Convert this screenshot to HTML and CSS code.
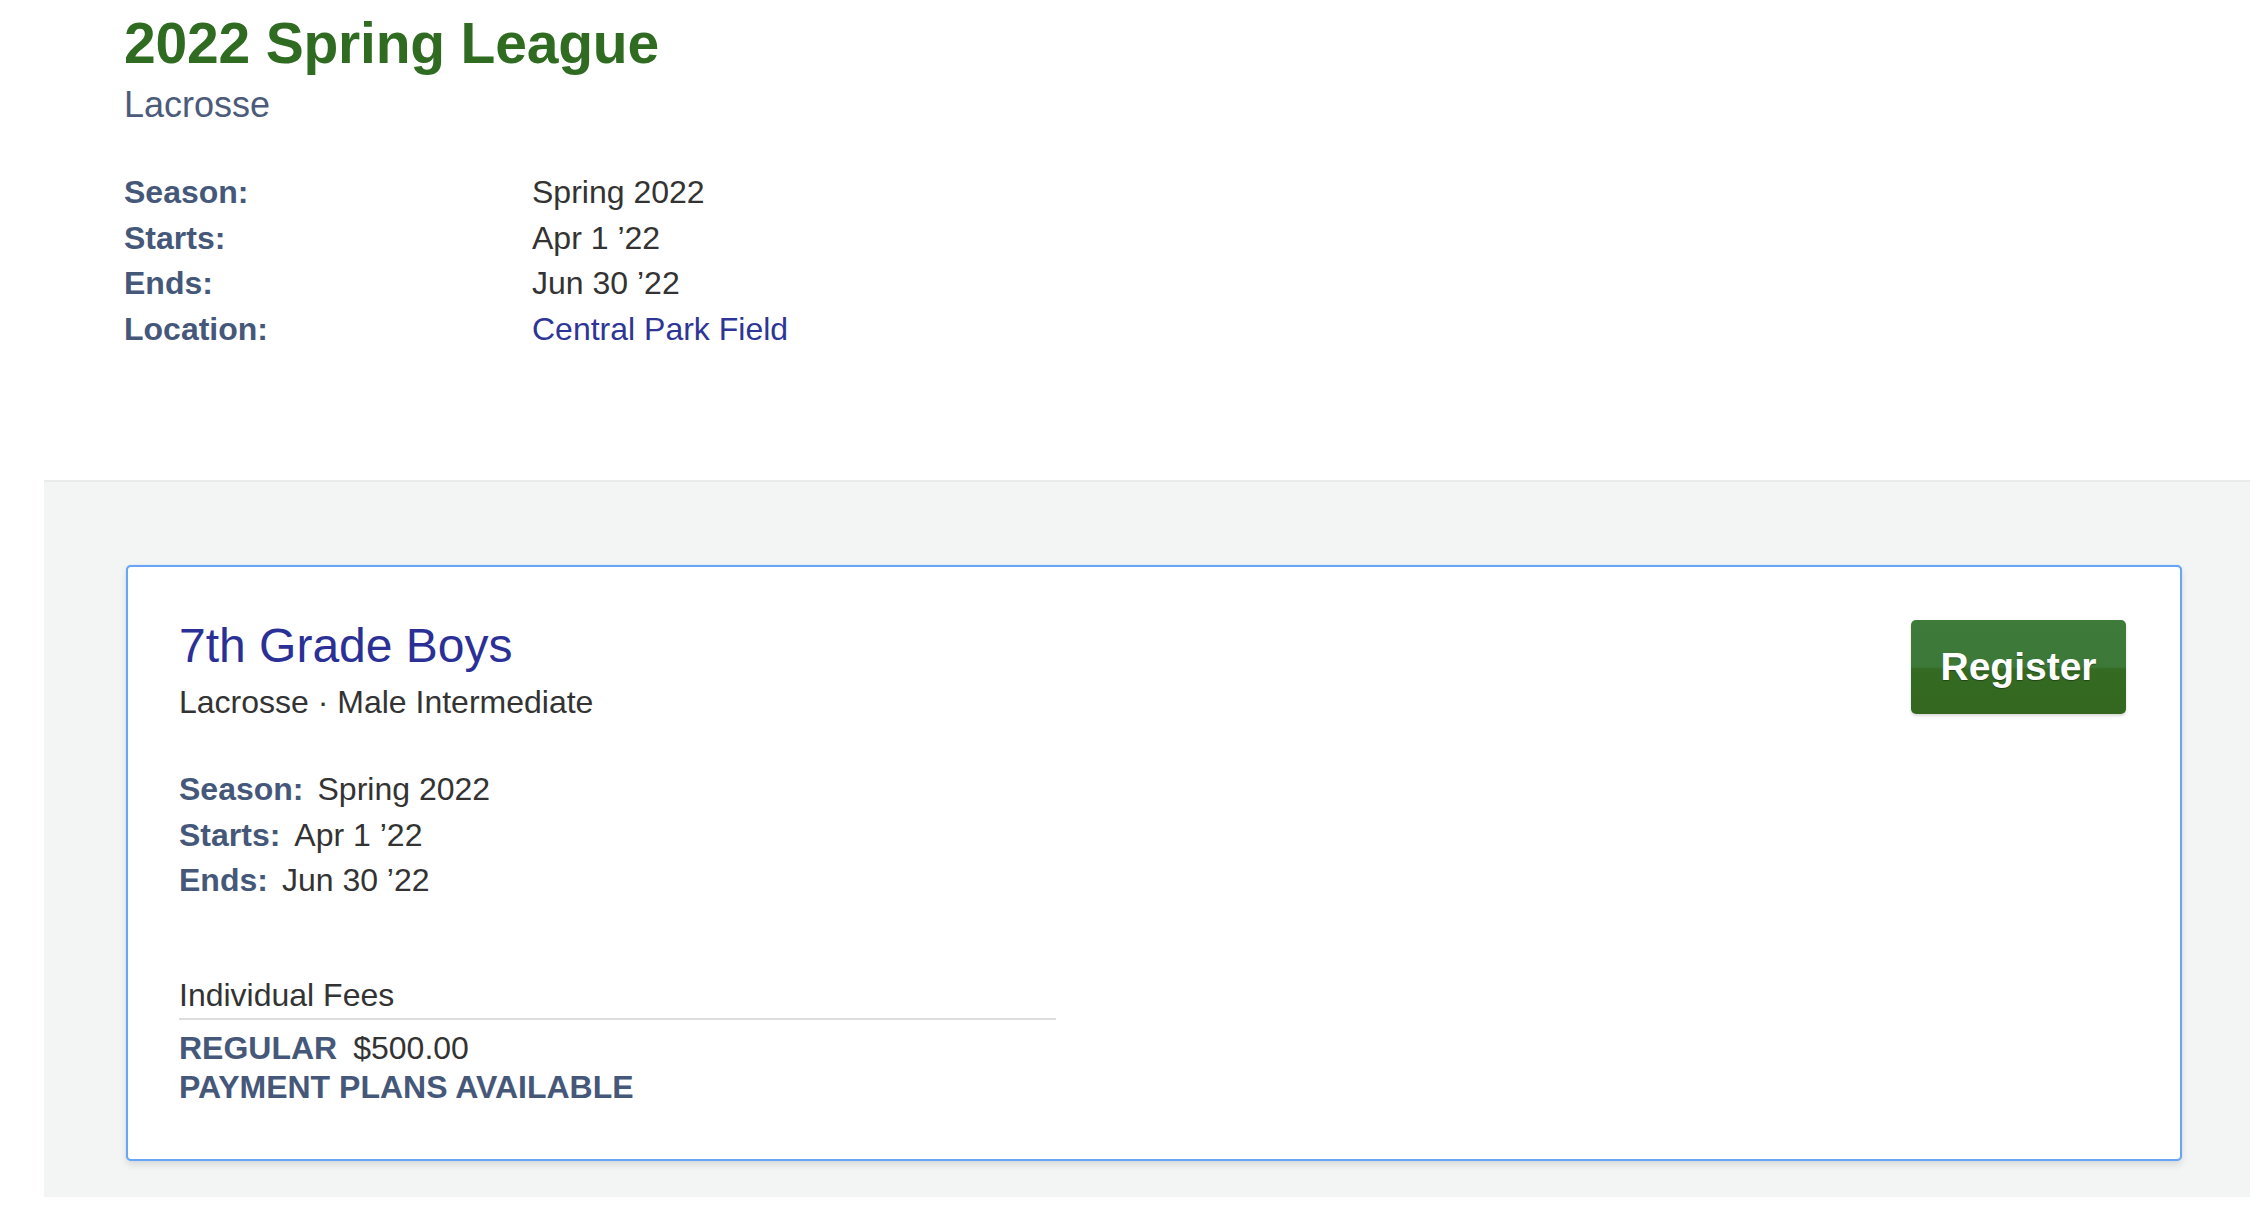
FILE: index.html
```html
<!DOCTYPE html>
<html lang="en">
<head>
<meta charset="utf-8">
<title>2022 Spring League</title>
<link rel="stylesheet" href="styles.css">
</head>
<body>
  <header class="league">
    <h1 class="league-title">2022 Spring League</h1>
    <div class="league-sport">Lacrosse</div>
    <dl class="league-details">
      <dt>Season:</dt><dd>Spring 2022</dd>
      <dt>Starts:</dt><dd>Apr 1 ’22</dd>
      <dt>Ends:</dt><dd>Jun 30 ’22</dd>
      <dt>Location:</dt><dd><a class="link" href="#">Central Park Field</a></dd>
    </dl>
  </header>

  <section class="programs">
    <article class="card">
      <div class="card-top">
        <div class="card-heading">
          <h2 class="card-title">7th Grade Boys</h2>
          <div class="card-sub">Lacrosse · Male Intermediate</div>
        </div>
        <button class="btn-register" type="button">Register</button>
      </div>
      <div class="card-details">
        <div class="row"><span class="lbl">Season:</span>Spring 2022</div>
        <div class="row"><span class="lbl">Starts:</span>Apr 1 ’22</div>
        <div class="row"><span class="lbl">Ends:</span>Jun 30 ’22</div>
      </div>
      <div class="fees">
        <div class="fees-head">Individual Fees</div>
        <div class="fee-line"><span class="fee-name">REGULAR</span>$500.00</div>
        <div class="fee-line"><span class="fee-name">PAYMENT PLANS AVAILABLE</span></div>
      </div>
    </article>
  </section>
</body>
</html>
```

FILE: styles.css
```css
html, body {
  margin: 0;
  padding: 0;
  background: #ffffff;
}

body {
  font-family: "Liberation Sans", Arial, Helvetica, sans-serif;
  color: #333333;
}

.league {
  padding: 11px 0 0 124px;
  height: 480px;
  box-sizing: border-box;
}

.league-title {
  margin: 0;
  font-size: 57px;
  line-height: 64px;
  font-weight: bold;
  color: #2f6c22;
  letter-spacing: -0.2px;
}

.league-sport {
  margin-top: 8px;
  font-size: 36px;
  line-height: 43px;
  color: #4b5b79;
}

.league-details {
  display: grid;
  grid-template-columns: 408px auto;
  margin: 44px 0 0 0;
  font-size: 32px;
  line-height: 45.5px;
}

.league-details dt {
  font-weight: bold;
  color: #45587a;
}

.league-details dd {
  margin: 0;
  color: #333333;
}

.link {
  color: #2d3596;
  text-decoration: none;
}

.programs {
  margin: 0 18px 16px 44px;
  padding: 83px 68px 36px 82px;
  background: #f3f4f4;
  border-top: 2px solid #e9ebeb;
}

.card {
  background: #ffffff;
  border: 2px solid #66a6f4;
  border-radius: 5px;
  box-shadow: 0 0 1px #8dbdf7, 0 4px 7px rgba(0, 0, 0, 0.10);
  padding: 50px 54px 52px 51px;
}

.card-top {
  display: flex;
  justify-content: space-between;
  align-items: flex-start;
}

.card-title {
  margin: 0;
  font-size: 48px;
  line-height: 57.6px;
  font-weight: normal;
  color: #2b3096;
}

.card-sub {
  margin-top: 5px;
  font-size: 32px;
  line-height: 45.5px;
  color: #333333;
}

.btn-register {
  margin-top: 3px;
  width: 215px;
  height: 94px;
  border: none;
  border-radius: 5px;
  background: linear-gradient(to bottom, #3e7a3a 0%, #3c7837 50%, #346a22 52%, #34671f 100%);
  color: #ffffff;
  font-family: "Liberation Sans", Arial, Helvetica, sans-serif;
  font-size: 39px;
  font-weight: bold;
  text-shadow: 0 1px 1px rgba(0, 0, 0, 0.35);
  box-shadow: 0 2px 3px rgba(0, 0, 0, 0.15);
  cursor: pointer;
}

.card-details {
  margin-top: 42px;
  font-size: 32px;
  line-height: 45.5px;
}

.lbl {
  font-weight: bold;
  color: #45587a;
  margin-right: 14px;
}

.fees {
  margin-top: 71px;
  width: 877px;
}

.fees-head {
  font-size: 32px;
  line-height: 40px;
  padding-bottom: 3px;
  border-bottom: 2px solid #dddddd;
  color: #333333;
}

.fees-head + .fee-line {
  margin-top: 9px;
}

.fee-line {
  font-size: 32px;
  line-height: 39px;
  color: #333333;
}

.fee-name {
  font-weight: bold;
  color: #45587a;
  margin-right: 16px;
}
```
